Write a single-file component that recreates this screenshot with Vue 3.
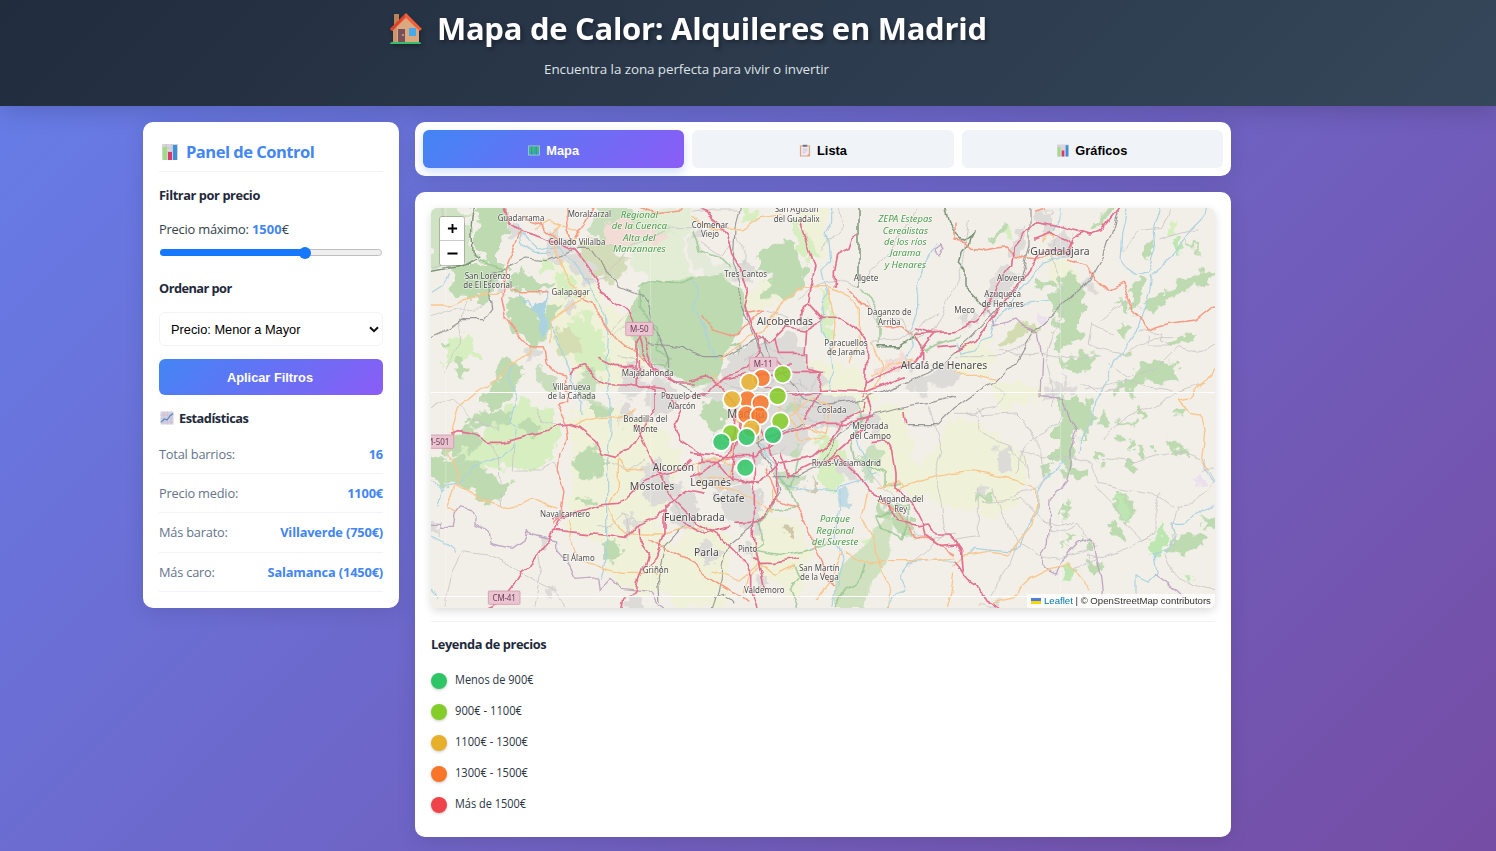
<script setup>
import { ref } from 'vue'

const tab = ref('mapa')
const price = ref(1500)
const min = 500
const max = 2000

const stats = [
  ['Total barrios:', '16', 't1'],
  ['Precio medio:', '1100€', 't2'],
  ['Más barato:', 'Villaverde (750€)', 't3'],
  ['Más caro:', 'Salamanca (1450€)', 't4'],
]

const legend = [
  ['Menos de 900€', 'green', 78.5],
  ['900€ - 1100€', 'lime', 67],
  ['1100€ - 1300€', 'yellow', 73],
  ['1300€ - 1500€', 'orange', 73],
  ['Más de 1500€', 'red', 71],
]

// text, centre x, baseline, width, size
const towns = [
  ['Guadarrama', 288, 64, 140, 25], ['Moralzarzal', 493, 50, 130, 25],
  ['Collado Villalba', 456, 134, 170, 25], ['San Lorenzo', 188, 236, 138, 25],
  ['de El Escorial', 188, 265, 146, 25], ['Galapagar', 437, 286, 115, 25],
  ['Majadahonda', 668, 528, 156, 25], ['Villanueva', 440, 569, 113, 25],
  ['de la Cañada', 440, 598, 144, 25], ['Pozuelo de', 768, 598, 120, 25],
  ['Alarcón', 770, 628, 84, 25], ['Colmenar', 855, 83, 110, 25],
  ['Viejo', 855, 112, 54, 25], ['San Agustín', 1115, 36, 132, 25],
  ['del Guadalix', 1115, 65, 138, 25], ['Tres Cantos', 962, 230, 128, 25],
  ['Algete', 1323, 242, 74, 25], ['Daganzo de', 1393, 345, 132, 25],
  ['Arriba', 1393, 374, 68, 25], ['Alcobendas', 1080, 374, 168, 32],
  ['Paracuellos', 1263, 437, 130, 25], ['de Jarama', 1263, 466, 114, 25],
  ['Alcalá de Henares', 1557, 507, 259, 32], ['Guadalajara', 1905, 164, 178, 32],
  ['Alovera', 1758, 244, 84, 25], ['Azuqueca', 1733, 291, 110, 25],
  ['de Henares', 1733, 321, 126, 25], ['Meco', 1619, 339, 62, 25],
  ['Coslada', 1220, 638, 88, 25], ['Madrid', 963, 655, 112, 37],
  ['Boadilla del', 661, 666, 132, 25], ['Monte', 661, 695, 74, 25],
  ['Alcorcón', 745, 812, 124, 31], ['Móstoles', 681, 870, 134, 31],
  ['Leganés', 857, 859, 122, 31], ['Getafe', 911, 907, 96, 31],
  ['Fuenlabrada', 808, 964, 182, 31], ['Navalcarnero', 420, 950, 150, 25],
  ['El Álamo', 461, 1082, 96, 25], ['Griñón', 692, 1120, 78, 25],
  ['Parla', 844, 1067, 74, 31], ['Pinto', 968, 1056, 58, 25],
  ['Valdemoro', 1018, 1178, 122, 25], ['San Martín', 1183, 1112, 122, 25],
  ['de la Vega', 1183, 1141, 116, 25], ['Rivas-Vaciamadrid', 1264, 799, 208, 25],
  ['Mejorada', 1336, 687, 108, 25], ['del Campo', 1336, 716, 124, 25],
  ['Arganda del', 1427, 906, 136, 25], ['Rey', 1427, 935, 38, 25],
]
const parks = [
  ['Regional', 643, 54, 112], ['de la Cuenca', 643, 88, 166],
  ['Alta del', 643, 123, 98], ['Manzanares', 643, 157, 158],
  ['ZEPA Estepas', 1441, 66, 162], ['Cerealistas', 1441, 101, 136],
  ['de los ríos', 1441, 135, 128], ['Jarama', 1441, 169, 92],
  ['y Henares', 1441, 203, 124], ['Parque', 1230, 967, 90],
  ['Regional', 1230, 1001, 112], ['del Sureste', 1230, 1035, 140],
]
// label, left, top, width
const shields = [
  ['M-50', 602, 367, 82, 56], ['M-11', 973, 472, 83, 56],
  ['M-501', -10, 705, 96, 70], ['CM-41', 190, 1173, 95, 70],
]
const barrios = [
  [1010, 534, 'orange'], [973, 546, 'yellow'], [1073, 523, 'lime'],
  [967, 598, 'orange'], [1007, 610, 'orange'], [921, 598, 'yellow'],
  [1058, 588, 'lime'], [964, 644, 'orange'], [1003, 647, 'orange'],
  [1066, 664, 'lime'], [979, 686, 'yellow'], [918, 700, 'lime'],
  [1044, 705, 'green'], [965, 711, 'green'], [889, 726, 'green'],
  [961, 803, 'green'],
]
const fills = { green: '#2dc565', lime: '#84cc28', yellow: '#e7b02b', orange: '#f97529', red: '#ef4349' }
</script>

<template>
  <div class="page">
    <header class="header">
      <div class="header-inner">
        <h1>
          <svg class="house" viewBox="0 0 34 34">
            <path d="M5 2h5v14H5z" fill="#b98355" />
            <path d="M4 17 17 4l13 13v14H4z" fill="#dba980" />
            <path d="M4 17v14h4V12z" fill="#c99670" />
            <path d="M17 1 1 17l2.500 2L17 6l13.500 13 2.500-2z" fill="#f0603c" />
            <path d="M1 17 16 2v3L3 19z" fill="#d9402f" />
            <path d="M9 17h7v13H9z" fill="#79505a" />
            <circle cx="14" cy="23" r="1" fill="#d9a27c" />
            <path d="M20 16h7v8h-7z" fill="#46a9ec" />
            <path d="M1 32q0-2 2-2h27q2 0 2 2z" fill="#35bd6b" />
          </svg>
          <svg class="title-text" viewBox="0 0 554 48"><text x="2" y="35" textLength="550">Mapa de Calor: Alquileres en Madrid</text></svg>
        </h1>
        <svg class="subtitle" viewBox="0 0 286 24"><text x="0" y="17" textLength="285">Encuentra la zona perfecta para vivir o invertir</text></svg>
      </div>
    </header>

    <div class="container">
      <aside class="panel sidebar">
        <h2>
          <svg class="ico18" viewBox="0 0 18 18">
            <path d="M1 1h16v16H1z" fill="#d9d3df" />
            <path d="M1 5h16M1 9h16M5 1v16M11 1v16" stroke="#c6bccd" stroke-width=".7" />
            <path d="M2 4h4v13H2z" fill="#9be07c" />
            <path d="M7 9h4v8H7z" fill="#dc376f" />
            <path d="M12 2h4v15h-4z" fill="#3a93d6" />
          </svg>
          <span class="h2-text">Panel de Control</span>
        </h2>
        <h3 class="t-filter">Filtrar por precio</h3>
        <p class="max">Precio máximo: <b>{{ price }}</b>€</p>
        <div class="range">
          <div class="track"><div class="done" :style="{ width: ((price - min) / (max - min)) * 206 + 8 + 'px' }"><i></i></div></div>
        </div>
        <h3 class="sort">Ordenar por</h3>
        <div class="select">
          <span>Precio: Menor a Mayor</span>
          <svg viewBox="0 0 10 7"><path d="M1 1.200 5 5.200 9 1.200" fill="none" stroke="#111" stroke-width="2" /></svg>
        </div>
        <button class="apply">Aplicar Filtros</button>
        <h3 class="stats-title">
          <svg class="ico14" viewBox="0 0 14 14">
            <path d="M.5.500h13v13H.500z" fill="#d8cfe0" />
            <path d="M.5 4h13M.5 7.500h13M.5 11h13M4 .500v13M7.500.500v13M11 .500v13" stroke="#c8bed3" stroke-width=".6" />
            <path d="m1 11 3.500-3L7 9l3-4 3-2.500" fill="none" stroke="#4b8fc4" stroke-width="1.200" />
          </svg>
          <span>Estadísticas</span>
        </h3>
        <div class="stats">
          <div v-for="s in stats" :key="s[0]" class="stat" :class="s[2]">
            <span>{{ s[0] }}</span><b>{{ s[1] }}</b>
          </div>
        </div>
      </aside>

      <main>
        <nav class="panel tabs">
          <button :class="{ active: tab === 'mapa' }" @click="tab = 'mapa'">
            <svg class="ico12" viewBox="0 0 13 13">
              <path d="M.5 2 4 1l5 1 3.500-1v10L9 12l-5-1-3.500 1z" fill="#38a9b8" />
              <path d="m2 3 3-1 2 3-2 4-3-2zM8 3l4-1v4L9 9zM6 9l2 2H5z" fill="#41bd72" />
              <path d="M4 1v10M9 2v10" stroke="#2b7faa" stroke-width=".7" />
              <path d="M.5 1.500h12M.5 11.500h12M.5 1.500v10M12.500 1.500v10" stroke="#b9d0ce" stroke-width=".8" />
            </svg>
            <span>Mapa</span>
          </button>
          <button :class="{ active: tab === 'lista' }" @click="tab = 'lista'">
            <svg class="ico12" viewBox="0 0 13 13">
              <path d="M1 1h11v12H1z" fill="#dfa57c" />
              <path d="M2.300 2h8.400v8l-2 2H2.300z" fill="#eeeaf5" />
              <path d="M4 .300h5v2.200H4z" fill="#77737d" />
              <path d="M4 5h5M4 7h5M4 9h3" stroke="#b9b3c5" stroke-width=".7" />
            </svg>
            <span>Lista</span>
          </button>
          <button :class="{ active: tab === 'graficos' }" @click="tab = 'graficos'">
            <svg class="ico12" viewBox="0 0 18 18">
              <path d="M0 0h18v18H0z" fill="#d9d3df" />
              <path d="M1 4h4v14H1z" fill="#9be07c" />
              <path d="M7 9h4v9H7z" fill="#dc376f" />
              <path d="M13 1h4v17h-4z" fill="#3a93d6" />
            </svg>
            <span>Gráficos</span>
          </button>
        </nav>

        <section class="panel map-card">
          <div class="map">
            <svg class="tiles" viewBox="18 24 2352 1200">
              <defs>
                <filter id="rough" x="0" y="0" width="2400" height="1250" filterUnits="userSpaceOnUse" color-interpolation-filters="sRGB">
                  <feTurbulence type="fractalNoise" baseFrequency=".028" numOctaves="3" seed="4" />
                  <feDisplacementMap in="SourceGraphic" scale="62" xChannelSelector="R" yChannelSelector="G" />
                </filter>
                <filter id="wavy" x="0" y="0" width="2400" height="1250" filterUnits="userSpaceOnUse" color-interpolation-filters="sRGB">
                  <feTurbulence type="fractalNoise" baseFrequency=".018" numOctaves="2" seed="9" />
                  <feDisplacementMap in="SourceGraphic" scale="26" xChannelSelector="R" yChannelSelector="G" />
                </filter>
              </defs>
              <path d="M18 24h2352v1200H18z" fill="#f2efe9" />

              <g filter="url(#rough)">
                <!-- farmland -->
                <g fill="#eff1d8">
                  <path d="M380 150l90 20 60 130 110 80 30 140-60 50-140-20-90-120z" />
                  <path d="M430 640l130-20 130 40 90 130-80 180-150 60-130-40 20-120 0-120z" />
                  <path d="M540 980h150l60 60-30 130-100 20-80-80zM790 960l130 40-20 220h-160l-20-120z" />
                  <path d="M1000 940l100 10 60 110-50 140-90-70-40-60z" />
                  <path d="M945 270l100-30 20 50-60 60-60-20zM1120 30h80v120l-60 20-20-60z" />
                  <path d="M1130 480l160 20 60 100-50 40-160-10-50-90zM1360 620l60-10 40 110 20 130-80 20-60-70z" />
                  <path d="M1570 650l60 10 120 60 60 90-40 110-60 30-120-30-80-20-40-90 60-70zM1590 430l90-10 40 50-30 60-80-10z" />
                  <path d="M1400 790l170-10 40 60-150 60-60-50zM1700 550l80-10 90 40-60 30-90 20zM1860 170l70 10 30 50-80 20z" />
                </g>
                <!-- light grassland -->
                <g fill="#d7efc0">
                  <path d="M425 370l60-30 50 60 10 110-60 20-40-60-20-70zM390 220l50 10 10 50-40 10zM340 180l30-10 20 30-40 20z" />
                  <path d="M240 620l50-20 90 30 30 90-60 80-80 10-80-10-20-80zM60 430l40-30 40 20 20 40-50 20-50 10zM100 740l90-40 50 50-60 60-80-20z" />
                  <path d="M945 30l50-4 20 20-50 14zM1100 60l30 10 40 80-20 40-30-40zM1200 250l10 50 15 100-15 30-20-60z" />
                  <path d="M1180 700l60 20 20 90-40 70-40-40zM1055 490l40-15 50 40-40 30-50-20z" />
                  <path d="M1740 80l20 10 5 25-25-5zM2230 60l30 15-10 30-25-10zM1310 1040l30-20 30 70-30 40-20-30z" />
                </g>
                <!-- woods -->
                <g fill="#bddab1">
                  <path d="M150 10h88l10 80-25 65-15 60-45-55-10-60z" />
                  <path d="M0 10h70l35 35 35-10-8 35 5 90 18 10-25 20-35-8-25 12-60 8z" opacity=".65" />
                  <path d="M85 200l75-20 60 20 10 15-20 60-20 32-50-10-40-12-15-35z" />
                  <path d="M260 210l50 5 45 35 35 5-35 20-110-10 0-30z" />
                  <path d="M240 290l50 5 30 30 30 40 20-60 40 10-40 60-20 55-35 25-50-65-20-50z" />
                  <path d="M390 390l50-10 30 60-30 30-40-20z" fill="#d4deb2" />
                  <path d="M230 470l40 10 30 30-35 50-15 40-55 25-20-20 35-60zM86 484l26-6 14 32-12 32-24-16zM40 430l20-8 10 20-20 15z" />
                  <path d="M345 500l50 30 30 45-50 5-35-30zM480 510l30-10 20 40-20 50 20 20-40 10-40-50z" opacity=".8" />
                  <path d="M455 150l55-40 50 20 30 55 20-20-10 50-25 30-60-20-50-40z" fill="#d3dcb8" />
                  <path d="M490 100l15-40 25-50h62l30 25 60 15 60 40-50 30-60 20-60 5-50-25-20-20z" opacity=".8" />
                  <path d="M650 20h140l20 30-20 40-20 50 20 60 30 50-30 10-60-6-70-18-30-30-20-50-20-20 30-50z" fill="#dfebcf" opacity=".8" />
                  <path d="M1025 140l35-15 30 10 35 15-10 30 30 10 5 30-20 40-20 30-40 20-30-20-30 10-10-25 40-30-10-35-30-5-20 10 30-45z" />
                  <path d="M800 70l40 80 40 55 50-5 40-20-5 45-45 20-40-20-40 10-50-80z" opacity=".25" />
                  <path d="M215 625l45 10-20 45-55-5-50 10-5-20 40-30zM90 700l50-15 35 35-15 35-45-5-35 25-35-20z" />
                  <path d="M0 770l65 5 15 30 0 45-20 10-60-30zM50 805l60-45 50 30 40 40 55 20-20 50-55 10-50-50-50 0zM280 660l45-10 25 25-30 45-40-20z" />
                  <path d="M445 780l15-25 40-10 40 20 0 55-50 10-40-10zM455 890l55 10-10 20-50-5zM530 1030l30-10 40 25-20 35-45 5zM510 610h40v35l-40 15z" />
                  <path d="M1050 795l50 25 45 10-15 25-40 15-45-35zM1345 735l25 25-25 90-25-10-15-70z" opacity=".75" />
                  <path d="M1390 955l35-8 40 8 3 40-35 10-38-25zM1365 905l50 35-25 20-45-20z" />
                  <path d="M1700 110l35-50 15 15-10 25-35 30-20-15zM2000 80l45-55 20 0-25 40-30 20zM2160 130l20-12 12 40-15 15-17-12z" />
                  <path d="M1830 250l50-15 15 10-10 20-40 0zM1885 270l40-50 30 10 30 60 0 50-30 20 10 50-50 40-30-10 20-60-30-60zM1910 480l40-20 60 10-20 45-40 10-20-20z" />
                  <path d="M1730 420l55-50 45-5 10 20-55 30-45 20z" fill="#d2dcb0" />
                  <path d="M2110 290l15-45 30-10 10 30-20 40-30 20zM2170 310l50-30 60-45 60-25 30 15-20 25-60 20-60 30-40 30-30-10zM2070 310h30l20 35-30-5zM2280 120l30 15 40 25-40-5zM2080 390l15-15 15 20-10 20z" />
                  <path d="M2110 530l60-45 50-15 30 30 20 45-60 10-50-10-50 20zM2060 570l70-10-20 18-40 5zM2240 420l60-25 20 0-20 25-50 20zM2095 460l40-5-10 20-20 5z" />
                  <path d="M1890 690l35-40 25 40-5 80 0 50-45-20-10-30zM1900 600l45-10 40 30 15 50-25 40-40-35zM1840 810l50-18-10 25-25 8zM1930 805l60 0 5 25-40 15-40-20zM1985 600l30 0-10 50-20 50-20 20-5-50zM2015 640l30-10 0 45-25 0z" />
                  <path d="M2060 710l30 0 5 20-20 5zM2105 730l15-5 5 20-15 5zM2220 720l25 0 50 35 0 15-50-20zM2100 775l30 0-5 35-25-10zM2010 770l35 5-20 20-20-10zM2140 740l30-5 5 20-20 15zM2070 660l60-5 0 10-40 4zM2230 630l40-10 10 15-30 8zM2138 625l25 0-5 20-15 5z" />
                  <path d="M1920 920l10-20 5 20-20 50-5-10zM2062 890l30-10 30 20 5 50-25 20-20-35-20-10zM2050 980l20-25 30 40-10 20-35-15zM1975 1020l40 15-5 20-35-10zM1985 1090l30-5 30 10-40 25-20-5zM1925 1000l20 10-15 25-20 0zM1660 860l35 20-5 30-30-5z" />
                  <path d="M2250 1010l40-15 40 10 10 30-60 30-40-10-10-25zM2330 950l60-10v50l-40-5z" />
                </g>
                <g fill="#bce7b1">
                  <path d="M1915 1090l25-15 20 30-10 40-35 0zM2065 890l30-5 25 60-20 20zM2170 1030l30-20 10-40 15 0 0 60-20 30-30-5zM2240 125l20-12 15 30-20 10z" />
                  <path d="M1730 740l20 5-10 20-15-5zM2290 1130h12v14h-12z" />
                </g>
                <!-- built-up areas -->
                <g fill="#dcdbd8">
                  <path d="M380 85l40 20 30 35-40 40-40-5 5-60zM410 160l50 0 40 40 15 60-40-20zM425 290l30 10-10 50-25-20zM295 455l45-15 10 25-50 25zM240 80l30-10 20 30-25 20zM205 240l40 0-10 40-20-10z" />
                  <path d="M605 490l35 0 20 60-20 40-60-5 0-50zM665 550l70-20 40 80-70 30-50-30zM590 610l40-10 0 50-45 30zM670 450l45 20 10 30-20 20zM800 90l30-10 25 20-40 20z" />
                  <path d="M650 800l50-20 30 40 50 40-50 50-60 0-20-50zM750 890l50-20 30 60-40 50-50 0-10-50zM585 960l30-20 20 40-20 40zM335 1015l35 0-5 30-25 0z" />
                  <path d="M815 790l45-20 70 30 20 40-70 30-60-20zM870 890l80-40 30 0 10 120-40 20-50-50zM820 1040l40-10 20 40-40 30zM960 1020l30 10-5 50-25-30zM975 870l30 0 5 150-30-30z" />
                  <path d="M900 510l40-70 80-10 60-30 40 20 10 60 90 70-50 60-30 60-60 20-40 30-70-20-40-50-40-50zM840 560l60-30 20 60-50 30zM1090 420l50 20 10 100-40 20-50-40zM930 190l50 0 10 40-50 20zM1120 380l20-20 20 15-30 20z" />
                  <path d="M1140 590l90-10 70 20-20 60-50 30-110-30zM1020 670l110-10 40 60-60 50-80-20zM860 700l130-10 60 60-50 50-80-20zM1230 770l50 10 20 60-30 0-35-35zM1295 650l50-20 30 30-10 40zM990 1120l30 10 0 40-20-10z" />
                  <path d="M1440 560l60-40 70-20 40 10-10 30-80 25-40 20zM1390 480l50-10 30 30-60 20zM1600 350l35-10 15 25-30 15zM1710 220l40-20 35 30-60 60-50 60-10-10z" />
                  <path d="M1840 40l40-10 5 60-35 20zM1760 130l30-40 15 30-20 50-20 0zM1870 120l50-20 25 30-20 35-50-5zM1710 750l45-15 15 80-45-5zM1970 250l20-10 35 25-20 10zM1860 570l40-20 35 30-45 20-30-5zM1905 515l20 30 20-5 0 40-30 0z" />
                  <path d="M0 970l43 0 0 30-43 0zM360 1165l20-10 15 15-20 20zM600 1200l60-5-10 29h-60zM1660 860l30 0-10 30-20 0zM1670 1210l60-5 0 20-40 9z" />
                </g>
                <!-- city parks -->
                <g fill="#bddab1">
                  <path d="M835 610l55-10 15 30-10 55-40 10-30-45z" />
                  <path d="M1095 610l30 5-5 20-25 0zM1110 735l30 10-10 25-20-5zM870 660l20 10-10 20zM1030 560l20 5-5 15z" opacity=".8" />
                </g>
                <g fill="#f3dcd6"><path d="M535 75l60-15 80 25 60 25-25 20-60-10-70 20-40-15z" /><path d="M1360 510l60-45 25-10-5 40-50 30-30 10z" /></g>
                <g fill="#ecdfee"><path d="M2310 830l30-10v40l-20 0zM1845 350l15-5 0 20-12 5z" /></g>
                <g fill="#d0c6aa"><path d="M1145 860l15-20 15 10-10 30-20-5zM1080 1000l10-20 20 0-10 30z" /></g>
              </g>

              <g filter="url(#wavy)">
                <!-- monte de El Pardo and the south-east park -->
                <g fill="#bddab1">
                  <path d="M640 270l20-20 80-5 50-20 60 5 40-12 30 30 35 20 5 60-10 60-40 60-25 65-35 40-50 5-90-60-70-35-40-90z" />
                  <path d="M1320 1030l60-80 20 10 0 60-10 50-20 40-30 30-20 84-90 0 0-80 30-50z" fill="#cfe1bf" />
                </g>
                <!-- water -->
                <g fill="none" stroke="#abd3e2" stroke-width="3.500" stroke-linejoin="round">
                  <path d="M285 280l10 20 15-5 10 20 20 10M345 280l20-10v60l-5 60-10 10-10-60-15-20M360 350l20 30 20 40 15 50 20 50 15 60 20 30 0 40" />
                  <path d="M280 70l10 60 40 30 50 0M290 100l50 50 60-10 60 60 30 50 30 60 20 40 10 60-5 90 10 110 0 80-10 130 0 220-10 70-10 30" />
                  <path d="M18 280l30-20 20-40M265 500l-10 30 20 60-20 80 20 10-10 60-30 30-90 30-40 50-50 10-20 60M18 840l30 40 10-5M18 1005l45 20 32 30M18 1170l25 30" />
                  <path d="M800 230l15 40-10 60 30 50 15 60 30 40M1220 10v54l-20 40 15 20 5 60-30 30 20 70-20 30 5 80 20 30 10 100-20 50" />
                  <path d="M1540 130l-20 20-25 50-20 80 0 60-20 50 10 50-20 30M980 590l-10 100 40 50 30 50 50 70 60 10 90 5 10-15 70-20 20-30 0 20M1280 660l20 60 20 60 20 40 20-5" />
                  <path d="M1590 430l20 30 40-10 20-30 30-10 15-60 30-20 30-50 20-20 30-40 30-30 60-25M1740 330l60-20 80-10M1910 10l-10 60-10 20M2110 10l-20 94-5 70 20 30 30 20 35-10 20-60-5-60 30-90M2340 10l-10 50-40 40-60 80-50 40-5 50-20 70-10 40-40 60-40 40-20 60-35 60-10 60-30 60-5 40" />
                  <path d="M1840 880l10-20 30-40 40-40M1840 880l-5 60-30 40-20 60-40 15-100-10-20 20M1590 1080l-60 0-80 10-30 40 20 40-30 20-30 44M1250 870l-10 60-10 90 30 60-10 40-30 100M2370 915l-40 15-50 40-40 0 10 40-20 40-40 10 10 60-30 30-40-20 0 50M2340 780l0 30 30 30" />
                </g>
                <path d="M335 305l30 0-5 70-8 40-10-25-3-45-25-25z" fill="#abd3df" />
                <path d="M1240 880l20-20 15 25-10 20 20 0-10 20-40-10z" fill="#abd3df" opacity=".7" />

                <!-- protected-area outlines -->
                <g fill="none" stroke="#98c691" stroke-width="5" stroke-linejoin="round" opacity=".8">
                  <path d="M640 260l35-15 75 5 60-20M640 270l0 50 60 60 0 70 35 20-15 30-50-10M800 90l20 60 60 20 40 40" />
                  <path d="M1310 264l40 50 15 40 0 80M1440 430l20-20 20-20-20 20 40 40 60-25 45-15M915 440l30-10 0 30M160 180l60 20 20 10" />
                  <path d="M1060 830l35 40 20 50-80 10-30 40 10 60-30 20 90 15 60-10 70-30M1320 1090l-20 60-40 20-30 54M1110 1100l15 30-30 40 20 54M1290 600l20 60-30 60 10 60 60 20 30 20 0 30 50 0" />
                  <path d="M1120 780l-20 80-40-10M1400 940l-50 5 20 40 60 30 20-40 0-60-45 0" />
                </g>
                <g fill="none" stroke="#7e967a" stroke-width="4.500" stroke-linejoin="round">
                  <path d="M150 10l-10 74 5 80 18 8-48 28-50 5-65 12M1302 10v250M1690 320l-20-10-30-30-20-20 0-50-20-20 10-40 20-20 5-20 10-20-15 20-20 10-20-20-20-30-15-60M1360 440h60l45-30" />
                </g>
                <g fill="none" stroke="#b090b7" stroke-width="4" opacity=".75">
                  <path d="M0 970l48 0-5 15 42 0 5-40 20-25 30 10 10 20 0 20 40 30 5 30 20 5 50 10 35-25 10-25 25 10 60 15 0 35 40 45 15 35 65-5 5 40 35-35 35 30 90 10 20 40 40 30M1690 330l20 50 60-20 20 20 50 20 10 70-5 120 70 5 20 60 20 35-20 60 0 50-10 40-50 60-5 130-20 30 0 30 40 30 20-40 20-20 30-30 30-15 15 15 10 40 15 60 5 40-10 90M1530 150l20-15 10 10-20 20zM2190 1125l70 50 40 40" />
                </g>
                <!-- local roads -->
                <g fill="none" stroke="#c8c5c7" stroke-width="2.500" stroke-linejoin="round">
                  <path d="M50 24l15 80-10 90-37 10M18 350l80-30 50 20 40-40M18 620l60-30 60 60 90 50M60 520l40-80 0-60 30-80M110 1055l80 10 60 30 90 50 40 20 40 50M230 920l-10-150-20-40M110 1060l-30 60-20 100M340 1060l10 60-20 100M340 620l10 40 60 20M270 730l-5 80 80 0 40-20 20 30M480 240l60-10 50-60 30-40 60-20 70-30 60 0" />
                  <path d="M550 410l60-70 30-20M560 420l50-50M580 470l50 10M650 460l90 30M540 780l60 30 60-30M520 980l40 0 40-40 30 20 40 0M600 940l10 60M740 900l40 70 60 20M800 40l60-10 80 0M830 130l60 40 40-60 30 40 0 50M1030 330l60 20M960 480l60-50 60 50M960 520l60 60 40-60M980 590l60-60 80 70 60-60M870 540l100 30 80-30 100 20M900 630l60-60 120 60 60-40M900 760l60-60 80 60 50-20M1130 540l0 100 60 40 20-60M1120 610l80 20 60-40M1300 260l-60-20-80 20-40 40M1300 250l80-70 60-100 50-60M1320 300l40 60 70 0 30 60 70-30 60-130 20-60 20-140M1340 430l80-10 120-80" />
                  <path d="M1190 150l60-70-10-56M1510 620l20 60 20 80-20 60 20 100 10 80-60 60-50 40M1340 820l60 60 60 110 60 30 70-20M1630 640l80-20 30-30-40-40M1660 624l10 20 100-5 30 30 50 80 10 100-30 20-80 20M1770 820l20-60 50-60 60-30 30-60M1700 864l50 120 30 40-30 80-60 90M1780 1025l60 40 60 10 60-20 60-15M1660 860l0 150-70 10M1670 905l120-10 60 60 30 40 40-5 40-20 30 50 0 80M1850 960l40 20 60-15M1810 830l-20-80 60 20 110 5" />
                  <path d="M1890 120l-10 60 30 60 0 100-20 60-30 80 20 80 0 60M1720 450l60 10 90 0 100 20 60-10M1820 420l-90 50-140 0M1970 550l50 25 80-20M2030 360l70-60 60 30M2000 370l-10 60 50 20 60 10 90-50 70 0M2000 375l60 30M2090 150l60-60 60-5 30-61M2200 120l60-20 60-10M2140 400l20-10 50 10 0 20 20 15-60 0 0-30M2050 490l60 40 90-30 60-60 60 20 50-30M1980 570l120-30 60 20 80 10M2030 720l80-70 80-30 60-40 90-30" />
                  <path d="M1950 770l50 20 20 60 100 20 60 10 60 40 60-5 20-20 50-60-50-60-60-20-70 10-60 20-100-10M2010 860l60 60 40 60 40 40 40-20 0-70 20-50M2260 920l-20 60 10 60M2170 1010l-60 30-80 30-50-10M2330 820l40-20M2020 1070l-80 40M1590 640l60 0 20 60 80 40 50 60M2220 1060l20 60 60 30 70 20" />
                </g>
                <g fill="none" stroke="#999" stroke-width="3.500" stroke-linejoin="round">
                  <path d="M0 418l78-36 30-20 65 0 30-40-10-70 10-30 50-20 50-25 60 5 55-20 40-20 40 0 25 35 20 40 30 20 10 25 50 20 20 5 15 20 20 70 25 60 15 25 5 60 20 25 60 30 30 5" />
                  <path d="M664 430l50 5 60 5 60 30 70 0 90-50 20-5 20 60M945 10l-15 74-5 100 20 60-5 60 40 80 30 90 80 60 40 50 60 30 90-10 90-30 80-30 60-25 30-20 90-80 150-160 35-120V10" />
                  <path d="M2085 10l-40 134-50 90-70 70-100 90-50 90-60 60-60 30-70 50-50 50-90 0" />
                  <path d="M1000 650l0 90 30 50 25 55 10 30-30 50-60 60-60 50-20 60-10 70-20 60 5 50M870 1190l25-10 30 30M780 970l-60 70-20 90 5 80M990 730l90-30 60-30M1040 830l80 0 60-30 30-50 30-50 60-40 100-30 110-20 80-20" />
                </g>
                <!-- primary roads -->
                <g fill="none" stroke="#fac68b" stroke-width="4" stroke-linejoin="round">
                  <path d="M0 315l78 0 30-15 70-20 50 0M315 440l-5 20-50 40-50 40-50 30-60 50-20 60-5 80 25 60 0 40M90 855l60 35 80 30 60-10 30-15 80 30M90 855l-25 70 30 15M330 85l40-20 40 10-25 30 10 60 25 60 15 30 40 30-70 55-30 20 0 70M415 80l50 20-20 20M425 960l20 80 30 40 60 25 50 15 110 0M450 675l60-20 60-5 60-20M580 770l20 40 60-5M580 780l0 80-30 60 20 50 40 35 100 0 60-20 60-10M800 55l80 30 70 5 60-40 60-10" />
                  <path d="M890 480l80-70 40-10 60-90 60-50 80 0 60 30 30 40 0 100-30 60M1210 265l20 110-10 90M1340 430l30 60-5 50-40 50M1340 530l40-30 80-20M860 520l60 90 30 80-30 80-60 20-60 0M1070 580l-20 100-60 50M1100 590l40 90 60 20 20-80-60-30-60 60 20 70 80-10M830 870l-10-80 50-10 60 10-20 40-60 10M860 850l70 20 60 30 50 40 0-70M860 1110l80 30 60-50 50 40 60-30M1010 1090l-40 40-10 60" />
                  <path d="M1330 870l-20 90 30 40 20 60 10 50 30 60-10 54M1370 1085l90 0 80-5 50-10M1260 1060l60 25 50 0M1250 1060l-20 60-60 80M1440 860l-20-20-60 20M1410 870l60-20 60-20 60-10 60-5 60 15 60 10 40 15 25 20 0 40-15 60-40 50-30 40-60-10-75 10-30 30M1700 1210l60-15 60-60 60-30 50-15 65 80M2390 470l-40 60-50 60-40 10 40 40 30 5 10 50-10 80 20 40M1590 520l60 0 70 15M1850 120l20-20 20 5-10 15M1590 1120l-10 60-10 44" />
                </g>
                <!-- trunk roads -->
                <g fill="none" stroke="#f79a83" stroke-width="4.500" stroke-linejoin="round">
                  <path d="M287 90l-15 40-30 80-12 90 10 50 40 50 35 40 40 0 10 50 30 30 30 5 0 80-30 10 30 60 5 40-25 40-5 60 20 60-10 70-30 30M240 265l50 10 80 0M450 285l50 20 20 40 40 60 40 30 80 60M300 50l40 20 60 50M425 10l5 94 20 30M510 10l-30 64-30 40M1265 265l20 20 20 30 30 10M1360 380l60 0 40 20M1020 800l20 60 20 40 50 20 20 20 20 60 20 40 40 100 20 20M1590 70l0 50 30 5 20 20 40 5 60-10 30 30 60 10 100-30M1920 180l60 15 30 40 40 35 50-20 10 10-10 30 20 40 40 40 10 20 60-20 80-10 50-40 50-10M670 1020l60 30 60 30 40 40 80 50 60 40M1360 900l60 40 40 60 60 20 70 40M640 24l50 15 80-10M830 350l30 40 70 20 60-60 30-20M965 340l50-10M1830 40l30-10" />
                </g>
                <!-- motorways -->
                <g fill="none" stroke="#e3708f" stroke-width="5" stroke-linejoin="round">
                  <path d="M232 10l24 54 35 30 50 15 60 20 45 20 30 35 35 50 20 45 40 25 40 25 15 35 20 80 15 30 20 30 30 20 50 25 45 0M432 522l10-15 45-10 30 40 20 15 60 0 60 10 30 10 0 50-20 40-20 40-30 50-45 20-40-10-20-40-50-40-30-10-30 5-50 20-120 30-40 0-30-20-30-10-40-5-20 8" />
                  <path d="M520 475l30 15 20 10 50 0 10 10 0-80 20-30 20 60 20 60M635 670l40 90 50 100 20 40 60 60 80 50 40 40 40 40 15 30 0 60 25 70M640 560l0-80M655 560l60 10 50 60-20 40 20 50 60 40 10 30M600 900l40-40 20-20 60-20 60-20 20-20M380 960l70-20 70-25 60-5 20-10M380 990l100 10 60 5 60 10 40-45 60-20 60-60 30-20 50 10M400 960l-30 60-50 70-30 20-30 50-40 50-70 30M640 980l0 40 30 40-20 60-20 60-30 10-10 50M720 920l0 80-30 80-20 20M760 960l80 40 70-20" />
                  <path d="M785 15l55 19 35 30 30 40 15 60 30 50 20 60-10 50 30 70 15 50-40 60-70 30-40 40-80 20M1125 60l45 140-10 50-10 60-20 25 0 20M1150 310l40 45 60 0 30 20 20 20 25 40 0 60-5 60-10 30M1300 105l-15 10-10 30-40 20-10 50 0 45M1000 410l30 20 50-50 60 10 50-30M1145 390l-5 70-80 0-10-50M1050 480l30 30 20-20M1145 460l0 50 45 10-20 80-30 60M885 540l100-20 100 0 110 0M1000 560l100 20 100-10 120 5 60-20 60-25M1320 570l20 60-30 60-70 60-40 40M795 540l50-10 50 40 40 60-10 120-70 60-60 20M795 760l100 10 100 0 60-50 60-30 70-20 80 0 80-20M820 790l60 0 40 50 80 10 60-60 100-20 60-50 30-60 60-30 10-30" />
                  <path d="M950 640l-20 130-10 70M985 760l0 250 20 100 15 60M925 970l80-5 50-80 0-80-30-80-40-90M1070 750l20 80 80-40 70-20 60 60 30 40 50 25 20 40 20 30 60 15 30-5 20 30 40 0 20 20 20 30M1340 725l40-5 20 30 10 70 0 40 60 60 20 40 10 45 50 35 40-5 20 20 5 60M1440 630l5 40M985 1070l20 20 40 0 80-15M1005 850l-30 0-30-10M1320 550l60-30 80-30 60-80 10-10-60-20M1470 400l120-5 60-30 30-30 30-60 50-80 5-50 40-50 30-30 60 10 100 30 30-10 70-90M1590 455l60-30 80-110 60-80 50-70 60-20 30 20 10-30-30-20-30-20-50 20M1490 490l0-40-25-50M1540 440l50-5M1590 1080l30 50 40 30 20 40 50 30M1920 165l25-50 30-15" />
                </g>
              </g>

              <g stroke="#fff">
                <path d="M18 577.500h2352M18 1189.500h2352" stroke-width="3" />
                <path d="M62.500 24v1200M677 24v1200M1907 24v1200" stroke-width="2" opacity=".45" />
              </g>

              <g class="town">
                <text v-for="(t, i) in towns" :key="i" :x="t[1]" :y="t[2]" :font-size="t[4]" :textLength="t[3]" lengthAdjust="spacingAndGlyphs">{{ t[0] }}</text>
              </g>
              <g class="park">
                <text v-for="(t, i) in parks" :key="i" :x="t[1]" :y="t[2]" :textLength="t[3]" lengthAdjust="spacingAndGlyphs">{{ t[0] }}</text>
              </g>
              <g v-for="s in shields" :key="s[0]" class="shield">
                <rect :x="s[1]" :y="s[2]" :width="s[3]" height="40" rx="3" />
                <text :x="s[1] + s[3] / 2" :y="s[2] + 29" :textLength="s[4]">{{ s[0] }}</text>
              </g>
              <circle v-for="(b, i) in barrios" :key="i" :cx="b[0]" :cy="b[1]" r="27" :fill="fills[b[2]]" fill-opacity=".85" stroke="#fff" stroke-width="5.500" />
            </svg>
            <div class="zoom">
              <a><svg viewBox="0 0 12 12"><path d="M6 1v10M1 6h10" /></svg></a>
              <a><svg viewBox="0 0 12 12"><path d="M.5 6h11" /></svg></a>
            </div>
            <div class="credit">
              <svg class="flag" viewBox="0 0 10 6"><path fill="#4c7be1" d="M0 0h10v3H0z" /><path fill="#ffd500" d="M0 3h10v3H0z" /></svg>
              <span><a>Leaflet</a> | © OpenStreetMap contributors</span>
            </div>
          </div>
          <div class="legend">
            <h3 class="t-leg">Leyenda de precios</h3>
            <div v-for="l in legend" :key="l[0]" class="item">
              <i :class="l[1]"></i>
              <svg viewBox="0 0 100 20"><text x="0" y="14" :textLength="l[2]" lengthAdjust="spacingAndGlyphs">{{ l[0] }}</text></svg>
            </div>
          </div>
        </section>
      </main>
    </div>
  </div>
</template>

<style>
body { background: #6f61bf; overflow: hidden; }
</style>

<style scoped>
* { box-sizing: border-box; margin: 0; }
.page { height: 851px; overflow: hidden; background: linear-gradient(135deg, #667eea 0%, #764ba2 100%) 0 0 / 100% 930px; font-family: "Open Sans", "Noto Sans", sans-serif; color: #1f2937; font-size: 12.800px; }
.header { height: 106px; background: linear-gradient(135deg, #212c3d, #35475a); box-shadow: 0 4px 24px rgba(0, 0, 0, .18); position: relative; }
.header-inner { width: 1088px; margin-left: 143px; display: flex; flex-direction: column; align-items: center; }
h1 { height: 57px; padding: 5px 0 0 3px; display: flex; gap: 12px; font-weight: 700; }
.house { width: 34px; height: 34px; margin-top: 7px; filter: drop-shadow(1px 2px 2px rgba(0, 0, 0, .3)); }
.title-text { width: 554px; height: 48px; fill: #fff; font-size: 31px; font-weight: 700; filter: drop-shadow(2px 2px 2px rgba(0, 0, 0, .35)); }
.subtitle { width: 286px; height: 24px; fill: #dfe2e6; font-size: 13.400px; }
.container { width: 1088px; margin: 16px 0 0 143px; display: flex; gap: 16px; align-items: flex-start; }
.panel { background: #fff; border-radius: 10px; box-shadow: 0 4px 20px rgba(0, 0, 0, .1); position: relative; }
.sidebar { width: 256px; height: 486px; padding: 16px; }
main { flex: 1; min-width: 0; display: flex; flex-direction: column; gap: 16px; }
h2 { height: 34px; padding: 0 0 6px 2px; border-bottom: 1px solid #f1f3f8; display: flex; align-items: center; gap: 7px; color: #4285f4; font-size: 16.500px; font-weight: 700; white-space: nowrap; }
.ico18 { width: 18px; height: 18px; }
.h2-text { letter-spacing: -.5px; }
h3 { height: 22px; line-height: 22px; font-size: 12.800px; font-weight: 700; white-space: nowrap; letter-spacing: -.4px; color: #1e293b; }
.t-filter { margin-top: 12px; }
.max { height: 22px; line-height: 22px; margin-top: 12px; font-size: 12.900px; letter-spacing: -.23px; color: #333f4d; white-space: nowrap; }
.max b { color: #4285f4; letter-spacing: .1px; }
.range { height: 16px; margin-top: 5px; padding: 4px 1px 0; }
.track { height: 7px; border: 1px solid #bdbdbd; border-radius: 4px; background: #efefef; }
.done { height: 7px; margin: -1px; border-radius: 4px; background: #1677ff; position: relative; }
.done i { position: absolute; right: -6px; top: -2.500px; width: 12px; height: 12px; border-radius: 50%; background: #1677ff; }
.sort { margin-top: 16px; letter-spacing: -.55px; }
.select { height: 34px; margin-top: 13px; border: 1px solid #f1f3f8; border-radius: 6px; padding: 0 3px 0 11px; display: flex; align-items: center; justify-content: space-between; font-family: "Liberation Sans", Arial, sans-serif; font-size: 12.800px; color: #000; }
.select svg { width: 10px; height: 7px; }
button { font-family: "Liberation Sans", Arial, sans-serif; border: 0; font-weight: 700; font-size: 12.800px; border-radius: 6px; }
.apply { display: block; width: 100%; height: 36px; margin-top: 13px; padding: 0 2px 0 0; color: #fff; background: linear-gradient(135deg, #4285f4, #8b5cf6); }
.stats-title { margin-top: 12px; padding-left: 1px; display: flex; align-items: center; gap: 5px; letter-spacing: -.5px; }
.ico14 { width: 14px; height: 14px; }
.stats { margin-top: 5.700px; }
.stat { height: 39.300px; display: flex; align-items: center; justify-content: space-between; border-bottom: 1px solid #f1f3f8; color: #64748b; letter-spacing: -.2px; white-space: nowrap; }
.stat b { color: #4285f4; letter-spacing: -.15px; }
.tabs { height: 54px; padding: 8px; display: flex; gap: 8px; }
.tabs button { flex: 1 1 0; min-width: 0; display: flex; align-items: center; justify-content: center; gap: 6px; background: #f0f3f8; color: #000; padding: 2px 0 0; }
.tabs .active { color: #fff; background: linear-gradient(135deg, #4285f4, #8b5cf6); box-shadow: 0 4px 10px rgba(66, 133, 244, .25); }
.ico12 { width: 12px; height: 13px; }
.map-card { height: 645px; padding: 16px; }
.map { height: 400px; border-radius: 6px; overflow: hidden; position: relative; box-shadow: 0 3px 10px rgba(0, 0, 0, .14); }
.tiles { display: block; width: 784px; height: 400px; }
.tiles text { font-family: "Noto Sans", sans-serif; text-anchor: middle; }
.town text { fill: #4b4a49; stroke: rgba(255, 255, 255, .65); stroke-width: 4px; paint-order: stroke; }
.park text { fill: #4b9b4b; font-size: 28px; font-style: italic; stroke: rgba(255, 255, 255, .6); stroke-width: 4px; paint-order: stroke; }
.shield rect { fill: #e8c5d0; stroke: #d49aaf; stroke-width: 2.500px; }
.shield text { fill: #713753; font-size: 24px; }
.zoom { position: absolute; left: 8px; top: 8px; width: 26px; border: 1px solid rgba(0, 0, 0, .2); border-radius: 3px; overflow: hidden; }
.zoom a { display: flex; height: 23px; align-items: center; justify-content: center; background: #fff; }
.zoom a + a { border-top: 1px solid #ccc; height: 25px; }
.zoom svg { width: 11px; height: 11px; stroke: #000; stroke-width: 2; }
.credit { position: absolute; right: 0; bottom: 0; height: 14px; width: 188px; padding: 0 4px; display: flex; align-items: center; gap: 3px; background: rgba(255, 255, 255, .8); font: 9.600px/14px "Liberation Sans", Arial, sans-serif; color: #333; white-space: nowrap; }
.credit a { color: #0078a8; }
.flag { width: 10px; height: 6px; flex: none; }
.legend { margin-top: 13px; border-top: 1px solid #f1f3f8; }
.t-leg { margin: 11px 0 9px; }
.item { height: 31.100px; display: flex; align-items: center; gap: 8px; padding-top: 2px; }
.item i { width: 16px; height: 16px; border-radius: 50%; box-shadow: 0 1px 3px rgba(0, 0, 0, .22); }
.item svg { width: 100px; height: 20px; margin-top: -1px; font-size: 12.200px; fill: #2b3544; }
.green { background: #2dc565; }
.lime { background: #84cc28; }
.yellow { background: #e7b02b; }
.orange { background: #f97529; }
.red { background: #ef4349; }
</style>
